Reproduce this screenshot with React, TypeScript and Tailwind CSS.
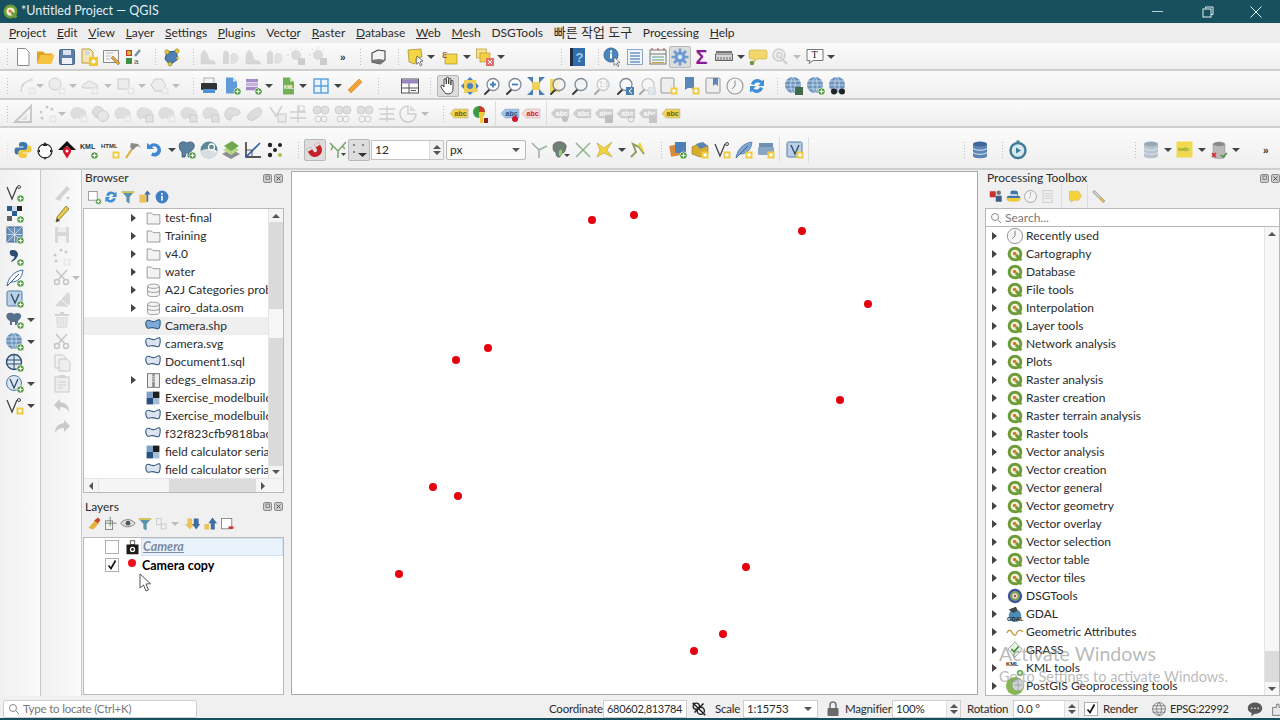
import React from "react";

const Svg = ({ children, s = 20, o = 1 }: { children?: React.ReactNode; s?: number; o?: number }) => (
  <svg viewBox="0 0 20 20" width={s} height={s} opacity={o} className="shrink-0">{children}</svg>
);

const P = () => (<g><circle cx="15.5" cy="15.5" r="3.6" fill="#4f9a3f" stroke="#fff" strokeWidth=".6" /><path d="M13.5 15.5h4M15.5 13.5v4" stroke="#fff" strokeWidth="1.2" /></g>);
const Y = ({ g }: { g?: boolean }) => (<g><rect x="11.5" y="11.5" width="7" height="7" fill={g ? "#cfcfcf" : "#f0cb42"} /><circle cx="15" cy="15" r="1.8" fill="#fff" /></g>);
const Handle = () => <path d="M3 18l4.5-4.5" stroke="#3c3c3c" strokeWidth="2" strokeLinecap="round" />;
const Mag = ({ c, f = "#ffffff", st = "#7f8c99" }: { c?: React.ReactNode; f?: string; st?: string }) => (<g><Handle /><circle cx="11" cy="8.5" r="6" fill={f} stroke={st} strokeWidth="1.3" />{c}</g>);
const Blob = ({ b = "#a9a9a9" }: { b?: string }) => <path d="M3 6c3-4 8-2 10-1s4 1 4 5-4 5-7 4-4 2-6 0-3-5-1-8z" fill={b} stroke="#8f8f8f" strokeWidth=".7" />;

const New = <Svg><path d="M4.5 1.5h8l3.5 3.5v13.5H4.5z" fill="#fff" stroke="#8b8b8b" /></Svg>;
const Open = <Svg><path d="M2 4.5h6l2 2h7.5v2H6L2 17z" fill="#e2a41f" /><path d="M5.5 8h14l-3 9H1.8z" fill="#f6c242" /></Svg>;
const Save = <Svg><rect x="2.5" y="2.5" width="15" height="15" rx="1" fill="#5a7fa8" stroke="#47688d" /><rect x="6" y="3" width="8" height="5" fill="#d9e3ee" /><rect x="5" y="11" width="10" height="6" fill="#eef2f6" /></Svg>;
const SaveAs = <Svg><path d="M3 2h8l3 3v11H3z" fill="#f4e6b0" stroke="#b89a3a" /><rect x="6" y="4" width="4" height="4" fill="#c9d6e4" /><rect x="10" y="10" width="9" height="9" fill="#f0c932" /><circle cx="14.5" cy="14.5" r="2" fill="#fff" /></Svg>;
const EditPage = <Svg><path d="M2.5 3.5h15v12h-15z" fill="#f7f7f7" stroke="#8a8a8a" /><path d="M5 6h7M5 9h5M5 12h4" stroke="#b8b8b8" /><path d="M17 18l-7-7 2-2 7 7z" fill="#d9a74a" stroke="#8f6a28" strokeWidth=".5" /></Svg>;
const Style = <Svg><rect x="3" y="3" width="6" height="6" fill="#c0392b" /><circle cx="6" cy="6" r="2.2" fill="#d6b43c" /><rect x="3" y="11" width="6" height="6" fill="#3f8f4b" /><path d="M12 9l5-6" stroke="#7b8ba0" strokeWidth="2.4" /><text x="11" y="17" fontSize="8" fill="#555" fontFamily="Liberation Sans">a</text></Svg>;
const Plug = <Svg><path d="M6 5l9-1 2 8-8 6-5-6z" fill="#4d7fb3" stroke="#2b5a8c" /><circle cx="6" cy="5" r="2.2" fill="#e7c93d" stroke="#7a6a20" strokeWidth=".5" /><circle cx="16" cy="4" r="2.2" fill="#e7c93d" stroke="#7a6a20" strokeWidth=".5" /><circle cx="9" cy="17" r="2" fill="#e7c93d" stroke="#7a6a20" strokeWidth=".5" /><circle cx="17" cy="11" r="1.5" fill="#e7c93d" /></Svg>;
const Hist = <Svg o={0.3}><path d="M3 17V7l3-4 3 3 2 7 5 1 2 3z" fill="#999" stroke="#888" strokeWidth=".5" /></Svg>;
const Hist2 = <Svg o={0.3}><path d="M2 17V6l3-3 3 3v11z" fill="#999" /><path d="M10 8c3-3 7-1 7 3s-4 6-7 5z" fill="#bbb" stroke="#888" strokeWidth=".6" /></Svg>;
const Bulb = <Svg o={0.35}><circle cx="9" cy="8" r="5" fill="#aaa" /><path d="M9 0v2M2 8H0M4 3L3 2M14 3l1-1" stroke="#999" /><rect x="11" y="11" width="7" height="7" fill="#888" /></Svg>;
const More = <Svg><text x="5" y="14" fontSize="10" fontWeight="700" fill="#333" fontFamily="Liberation Sans">»</text></Svg>;
const Cube = <Svg><path d="M4 6l6-3 7 1v9l-5 4-8-2z" fill="#f2f2f2" stroke="#444" strokeWidth="1.1" /><path d="M4 13l7-1 6 1-5 4-8-2z" fill="#777" /></Svg>;
const SelYellow = <Svg><path d="M2 3l13-1 1 8-6 1-1 6-6-2z" fill="#f3d545" stroke="#8f7a1d" strokeWidth=".6" /><path d="M11 9l6 5-3 .5 2 3.500-1.500 .8-2-3.500-2 2z" fill="#fff" stroke="#444" strokeWidth=".7" /></Svg>;
const SelExpr = <Svg><rect x="5" y="7" width="12" height="10" fill="#f3d545" stroke="#9a852b" strokeWidth=".6" /><text x="2" y="11" fontSize="13" fill="#8a4a14" fontFamily="Liberation Serif">ε</text></Svg>;
const SelDesel = <Svg><rect x="1.500" y="2" width="10" height="9" fill="#f6e18a" stroke="#b89a3a" strokeWidth=".7" /><rect x="5" y="6" width="10" height="9" fill="#f3cf45" stroke="#b89a3a" strokeWidth=".7" /><rect x="11" y="11" width="8" height="8" fill="#e46b6b" /><path d="M13 13l4 4M17 13l-4 4" stroke="#fff" /></Svg>;
const HelpBook = <Svg><rect x="3" y="1" width="15" height="18" fill="#2f6ea8" /><rect x="3" y="1" width="3" height="18" fill="#1e2f44" /><text x="8.500" y="15" fontSize="13" fontWeight="700" fill="#a9cbe8" fontFamily="Liberation Sans">?</text></Svg>;
const Identify = <Svg><circle cx="8" cy="8" r="7" fill="#4a85bd" stroke="#38699a" /><rect x="7" y="6.500" width="2" height="5" fill="#fff" /><rect x="7" y="3.500" width="2" height="2" fill="#fff" /><path d="M11 10l6 5.500-2.800 .3 1.800 3-1.200 .7-1.800-3-2 2z" fill="#fff" stroke="#555" strokeWidth=".7" /></Svg>;
const Attr = <Svg><rect x="2.500" y="2.500" width="15" height="15" fill="#f1f5f9" stroke="#8ca6c2" /><path d="M5 6h10M5 9h10M5 12h10M5 15h10" stroke="#6d94be" strokeWidth="1.300" /></Svg>;
const Stats = <Svg><rect x="2" y="3" width="16" height="14" fill="#f4f4f4" stroke="#777" /><path d="M2 7h16" stroke="#777" /><path d="M4 3V1M10 3V1M16 3V1" stroke="#c0392b" /><path d="M4 10h12M4 13h12" stroke="#50a090" strokeWidth="1.200" /><path d="M4 15.500h12" stroke="#d0a030" /></Svg>;
const Gear = <Svg><g stroke="#6e9bd1" strokeWidth="2.600"><path d="M10 1.500v17M1.500 10h17M4 4l12 12M16 4L4 16" /></g><circle cx="10" cy="10" r="5.500" fill="#6e9bd1" /><circle cx="10" cy="10" r="2.200" fill="#dce7f4" /></Svg>;
const Sigma = <Svg><text x="3.500" y="17" fontSize="20" fontWeight="700" fill="#8a1a96" fontFamily="Liberation Sans">Σ</text></Svg>;
const Ruler = <Svg><rect x="1.500" y="7" width="17" height="6.500" fill="#d8d8d8" stroke="#666" /><path d="M4 10v3.500M7 10v3.500M10 10v3.500M13 10v3.500M16 10v3.500" stroke="#666" /><rect x="2" y="4" width="16" height="2" fill="#777" /></Svg>;
const Tip = <Svg><path d="M3 3h14q2 0 2 2v5q0 2-2 2H9l-3 3 .5-3H3q-2 0-2-2V5q0-2 2-2z" fill="#f3d76a" stroke="#c9ab3b" strokeWidth=".6" /><circle cx="4" cy="16" r="2.300" fill="#6f9a45" /></Svg>;
const DisSearch = <Svg o={0.35}><circle cx="9" cy="8" r="6" fill="#ddd" stroke="#888" strokeWidth="1.500" /><text x="6" y="11" fontSize="8" fill="#777" fontWeight="700">Q</text><path d="M13 13l4 4" stroke="#888" strokeWidth="2" /></Svg>;
const TextT = <Svg><path d="M2 2.500h16v11H8l-4 3 1-3H2z" fill="#fdfdfd" stroke="#777" /><text x="6.500" y="11" fontSize="10" fill="#222" fontFamily="Liberation Serif">T</text></Svg>;

const dis = (c: React.ReactNode) => <Svg o={0.33}>{c}</Svg>;
const D1 = dis(<><path d="M4 16C4 9 8 5 14 4" fill="none" stroke="#777" strokeWidth="1.200" /><circle cx="14" cy="4" r="2" fill="#bbb" /><Y g /></>);
const D2 = dis(<><circle cx="8" cy="8" r="6" fill="#ddd" stroke="#777" /><Y g /></>);
const D3 = dis(<><path d="M2 11c0-3 3-3 4-4 2-3 7-2 8 1 3 0 4 2 3 4H3z" fill="#ddd" stroke="#777" /><Y g /></>);
const D4 = dis(<><rect x="2" y="3" width="11" height="10" fill="#ddd" stroke="#777" /><Y g /></>);
const D5 = dis(<><path d="M5 3h7l4 6-4 6H5L1 9z" fill="#ddd" stroke="#777" /><Y g /></>);
const Printer = <Svg><rect x="5" y="2" width="10" height="6" fill="#f2f2f2" stroke="#888" strokeWidth=".6" /><rect x="2" y="7" width="16" height="7" rx="1" fill="#2e3338" /><rect x="4" y="13" width="12" height="4" fill="#4e90d2" /></Svg>;
const BlueDoc = <Svg><path d="M4 1.500h7l4 4v12H4z" fill="#5f9bd8" /><path d="M11 1.500v4h4z" fill="#cfe2f5" /><P /></Svg>;
const Purple = <Svg><rect x="3" y="3" width="12" height="3.300" fill="#a78cc9" /><rect x="3" y="7" width="12" height="3.300" fill="#c6b3dd" /><rect x="3" y="11" width="12" height="3.300" fill="#a78cc9" /><P /></Svg>;
const Kml = <Svg><path d="M4 1.500h7l4 4v13H4z" fill="#74b057" /><path d="M11 1.500v4h4z" fill="#d8ecc8" /><text x="5" y="13" fontSize="4.500" fontWeight="700" fill="#fff" fontFamily="Liberation Sans">KML</text></Svg>;
const Grid = <Svg><rect x="3" y="3" width="14" height="14" fill="#e9f3fb" stroke="#57a0de" strokeWidth="1.400" /><path d="M10 3v14M3 10h14" stroke="#57a0de" strokeWidth="1.400" /></Svg>;
const Ruler2 = <Svg><path d="M3 14L14 3l3 3L6 17z" fill="#f2a23a" stroke="#cf7f18" strokeWidth=".6" /></Svg>;
const Tbl = <Svg><rect x="1.500" y="3" width="17" height="14" fill="#fafafa" stroke="#555" /><rect x="2" y="3.500" width="16" height="4" fill="#9a87c0" /><path d="M1.500 12h17M9 7.500V17" stroke="#555" /><path d="M11 14.500h5" stroke="#555" /></Svg>;
const Hand = <Svg><path d="M6 10V4q0-1.300 1.100-1.300T8.300 4v4-5.500q0-1.300 1.200-1.300t1.200 1.300V8 3.500q0-1.200 1.100-1.200t1.100 1.200V9 5.500q0-1.200 1.100-1.200t1 1.200V12q0 6-5 6-3 0-4.500-3L3 11q-.5-1.500.7-1.700T6 11z" fill="#fff" stroke="#333" strokeWidth=".9" /></Svg>;
const Pan = <Svg><path d="M4 4l12 0 2 12-14 1z" fill="#efd15a" /><path d="M10 1l3 3H7zM10 19l3-3H7zM1 10l3-3v6zM19 10l-3-3v6z" fill="#4a83c4" /><circle cx="10" cy="10" r="3" fill="#4a83c4" /></Svg>;
const ZoomIn = <Svg><Mag c={<path d="M8 8.500h6M11 5.500v6" stroke="#3f7dbf" strokeWidth="1.800" />} /></Svg>;
const ZoomOut = <Svg><Mag c={<path d="M8 8.500h6" stroke="#3f7dbf" strokeWidth="1.800" />} /></Svg>;
const ZoomFull = <Svg><rect x="6" y="6" width="8" height="8" fill="#efd15a" /><path d="M1 1h6v6zM19 1h-6v6zM1 19h6v-6zM19 19h-6v-6z" fill="#4a7fb0" /></Svg>;
const ZoomLayer = <Svg><rect x="2" y="3" width="10" height="13" fill="#f1d558" /><Mag f="#f6f6f6cc" /></Svg>;
const ZoomSel = <Svg><Mag f="#f3f3f3" /></Svg>;
const Zoom11 = <Svg o={0.4}><Mag f="#fafafa" c={<text x="7" y="11" fontSize="7" fill="#888">1:1</text>} /></Svg>;
const ZoomLast = <Svg><Mag f="#fafafa" /><rect x="11" y="11" width="8" height="8" fill="#4a7fb0" /><path d="M17 12.500l-3 2.500 3 2.500" stroke="#fff" fill="none" /></Svg>;
const ZoomNext = <Svg o={0.4}><Mag f="#fafafa" /><rect x="11" y="11" width="8" height="8" fill="#b8c6d4" /><path d="M13 12.500l3 2.500-3 2.500" stroke="#fff" fill="none" /></Svg>;
const Bm1 = <Svg><rect x="2" y="2" width="13" height="15" rx="1" fill="#eee" stroke="#999" /><Y /></Svg>;
const Bm2 = <Svg><path d="M4 1h9v13l-4.500-3L4 14z" fill="#5b87b8" /><path d="M4 1h9v11H4z" fill="#5b87b8" /><Y /></Svg>;
const Bm3 = <Svg><rect x="3" y="2" width="14" height="15" rx="1" fill="#eee" stroke="#999" /><path d="M10 2h5v8l-2.500-2L10 10z" fill="#5b87b8" /></Svg>;
const Clock = <Svg><circle cx="10" cy="10" r="8" fill="#f5f5f5" stroke="#9a9a9a" strokeWidth="1.200" /><path d="M10 4.500V10l-3 3" stroke="#888" fill="none" /></Svg>;
const Refresh = <Svg><path d="M4 8a6.500 6.500 0 0 1 11-3l2-1.500V10h-6l2.500-2.500A4 4 0 0 0 7 9z" fill="#3f8fd6" /><path d="M16 12a6.500 6.500 0 0 1-11 3l-2 1.500V10h6l-2.500 2.500A4 4 0 0 0 13 11z" fill="#3f8fd6" /></Svg>;
const Globe = ({ b }: { b?: React.ReactNode }) => <Svg><circle cx="9" cy="9" r="8" fill="#6d94bd" /><path d="M9 1c-3 3-3 13 0 16M9 1c3 3 3 13 0 16M1 9h16M2 5h14M2 13h14" stroke="#dfe9f3" strokeWidth=".7" fill="none" />{b}</Svg>;
const G1 = <Globe b={<rect x="11" y="11" width="8" height="8" fill="#41694a" />} />;
const G2 = <Globe b={<P />} />;
const G3 = <Globe b={<g fill="#222"><circle cx="6" cy="15.500" r="3" /><circle cx="14" cy="15.500" r="3" /></g>} />;
const dd = (c: React.ReactNode) => <Svg o={0.3}>{c}</Svg>;
const R1 = dd(<><path d="M2 18L18 2v16z" fill="none" stroke="#666" strokeWidth="2" /><path d="M8 16l6-6v6z" fill="#bbb" /></>);
const R2 = dd(<><circle cx="3" cy="8" r="1.500" fill="#666" /><circle cx="9" cy="3" r="1.500" fill="#666" /><circle cx="14" cy="5" r="1.500" fill="#666" /><circle cx="4" cy="14" r="1.500" fill="#666" /><Y g /></>);
const R3 = dd(<><Blob /><Y g /></>);
const R4 = dd(<><circle cx="7" cy="8" r="5.500" fill="#aaa" stroke="#777" /><circle cx="12" cy="12" r="5.500" fill="#ccc" stroke="#777" /></>);
const R5 = dd(<><Blob /><rect x="11" y="11" width="7" height="7" fill="#bbb" stroke="#777" /></>);
const R6 = dd(<><path d="M2 10c0-6 6-7 9-6s7 2 6 5-5 2-7 3-1 5-4 4-4-3-4-6z" fill="#aaa" stroke="#777" /></>);
const R7 = dd(<><path d="M3 15c-2-3 1-6 4-8s7-5 9-2 0 6-4 9-7 3-9 1z" fill="#aaa" stroke="#777" /></>);
const R8 = dd(<><path d="M2 3l6 9 6-10" fill="none" stroke="#777" strokeWidth="1.500" /><rect x="10" y="10" width="8" height="8" fill="#ddd" stroke="#666" /></>);
const R9 = dd(<><path d="M10 1v18M2 8h16M2 14h16" stroke="#777" strokeWidth="1.300" /><rect x="11" y="2" width="5" height="5" fill="none" stroke="#777" /></>);
const R10 = dd(<><circle cx="6" cy="6" r="4" fill="#aaa" stroke="#777" /><circle cx="14" cy="6" r="4" fill="#aaa" stroke="#777" /><circle cx="7" cy="15" r="3" fill="none" stroke="#777" /><circle cx="13" cy="15" r="3" fill="none" stroke="#777" /></>);
const R11 = dd(<><path d="M2 5h16M3 10h14M2 15h16M10 2v16" stroke="#777" strokeWidth="1.300" /></>);
const R12 = dd(<><path d="M10 2a8 8 0 1 0 8 8h-8z" fill="none" stroke="#777" strokeWidth="1.500" /><path d="M12 1l6 6h-6z" fill="#999" /></>);
const Abc = ({ f = "#f2d254", t = "#6f5f10", o = 1, b }: { f?: string; t?: string; o?: number; b?: React.ReactNode }) => (<Svg o={o}><path d="M1 9.500L5 5h14v9H5z" fill={f} stroke="#9a9a9a" strokeWidth=".4" /><text x="5.500" y="12" fontSize="7" fontWeight="700" fill={t} fontFamily="Liberation Sans">abc</text>{b}</Svg>);
const PieL = <Svg><circle cx="8" cy="8" r="6" fill="#3d9a45" /><path d="M8 8V2a6 6 0 0 1 6 6z" fill="#d73527" /><path d="M8 8h6a6 6 0 0 1-6 6z" fill="#f0c93a" /><rect x="9" y="12" width="3" height="7" fill="#f0c93a" /><rect x="13" y="14" width="4" height="5" fill="#8f1e1e" /></Svg>;
const PyL = <Svg><path d="M10 2c-4 0-4 1.500-4 3v1.500h4.500V7.500H4C2 7.500 1.500 9 1.500 11s1 3.500 2.500 3.500h1.500v-2c0-1.500 1-2.500 2.500-2.500h4c1.500 0 2.500-1 2.500-2.500V5c0-2-2-3-4.500-3z" fill="#3d78ad" /><path d="M10 18c4 0 4-1.500 4-3v-1.500H9.500v-1H16c2 0 2.500-1.500 2.500-3.500s-1-3.500-2.500-3.500h-1.500v2c0 1.500-1 2.500-2.500 2.500H8c-1.500 0-2.500 1-2.500 2.500V15c0 2 2 3 4.500 3z" fill="#f0c93d" /></Svg>;
const Compass = <Svg><circle cx="10" cy="11" r="7" fill="#fff" stroke="#222" strokeWidth="1.100" /><path d="M10 2l2.500 4h-5zM10 20l-1.500-3h3zM2 11l3-1.500v3zM18 11l-3-1.500v3z" fill="#222" /></Svg>;
const RedArrow = <Svg><path d="M10 1l9 9h-5L10 6l-4 4H1z" fill="#111" /><path d="M10 7c3 0 4.500 2 4 5l-4 6.500L6 12c-.5-3 1-5 4-5z" fill="#d8152a" /><circle cx="10" cy="11" r="1.500" fill="#fff" /></Svg>;
const KmlT = <Svg><text x="1" y="9" fontSize="7" fontWeight="700" fill="#333" fontFamily="Liberation Sans">KML</text><P /></Svg>;
const HtmlT = <Svg><text x="0" y="8" fontSize="6" fontWeight="700" fill="#333" fontFamily="Liberation Sans">HTML</text><Y /></Svg>;
const Hammer = <Svg><path d="M3 18L11 6" stroke="#e0a93a" strokeWidth="2" /><path d="M8 3l7 1 3 4-3-2-2 1-3 3-3-3z" fill="#8a8a8a" /></Svg>;
const Undo = <Svg><path d="M16 10a6.500 6.500 0 0 1-10 5.500l1.500-3A3.500 3.500 0 0 0 12.500 10 3.500 3.500 0 0 0 7 7l2 2H2V3l2.500 2A7 7 0 0 1 16 10z" fill="#3f87d1" /></Svg>;
const Pg = <Svg><path d="M3 3c3-2 5-1 7 0 3-2 6-1 7 1 1 3-1 6-3 7v6h-3v-5l-2 1-1 4H5v-5C3 11 1 6 3 3z" fill="#5b7f9f" stroke="#2f4f6a" strokeWidth=".7" /><P /></Svg>;
const TealG = <Svg><circle cx="10" cy="10" r="8.500" fill="#5c8a98" /><path d="M1.500 11c5-3 12-2 17 0-1 5-5 7.500-8.500 7.500S2.500 16 1.500 11z" fill="#d8dfe3" /><circle cx="12.500" cy="7" r="3" fill="none" stroke="#fff" strokeWidth="1.300" /><path d="M14.500 9.500l2.500 2.500" stroke="#fff" strokeWidth="1.300" /></Svg>;
const Lay = <Svg><path d="M10 9l9 5-9 5-9-5z" fill="#8a8f94" /><path d="M10 5l8 5-8 5-8-5z" fill="#b7d686" /><path d="M11 1l7 5-8 5-7-5z" fill="#6fa84d" /></Svg>;
const Graph = <Svg><path d="M3 2v15h15" fill="none" stroke="#222" strokeWidth="1.400" /><path d="M3 17L17 3" stroke="#2a5fb0" strokeWidth="1.600" /><path d="M4 10h5v7" fill="none" stroke="#555" /></Svg>;
const Dots = <Svg><circle cx="5" cy="5" r="2.200" fill="#222" /><circle cx="15" cy="5" r="2" fill="#222" /><circle cx="10" cy="10" r="2" fill="#222" /><circle cx="5" cy="15" r="2.200" fill="#222" /><circle cx="15" cy="15" r="2" fill="#a5c24a" /></Svg>;
const Magnet = <Svg><path d="M3 5l5 0 0 5c0 3 4 3 4 0l0-5 5 0 0 5c0 9-14 9-14 0z" transform="rotate(-30 10 10)" fill="#c82027" /><path d="M3 5h5v3H3zM12 5h5v3h-5z" transform="rotate(-30 10 10)" fill="#ddd" /></Svg>;
const Tree1 = <Svg><path d="M2 3l8 8 8-9M10 11v7M5 6l-2 4M14 6l3 3" stroke="#7da06b" strokeWidth="1.500" fill="none" /><path d="M13 13l5 0-2.500 3z" fill="#444" /></Svg>;
const Spacing = <Svg><rect x="4" y="4" width="2" height="2" fill="#888" /><rect x="13" y="4" width="2" height="2" fill="#888" /><rect x="4" y="11" width="2" height="2" fill="#888" /><path d="M9 13l9 0-4.500 4z" fill="#333" /></Svg>;
const TreeGray = <Svg><path d="M3 3l7 7 8-4M10 10v8" stroke="#9db3a3" strokeWidth="1.600" fill="none" /></Svg>;
const BlobG = <Svg><path d="M2 6c0-4 6-5 9-4s5 3 4 6-1 4-3 5-2 5-5 4-1-4-3-5-2-3-2-6z" fill="#6f7f76" stroke="#3f4f46" strokeWidth=".5" /><path d="M8 12c0-3 3-3 3-1s0 5-2 5-1-2-1-4z" fill="#9ccc70" /><path d="M13 14l6 0-3 3z" fill="#444" /></Svg>;
const XG = <Svg><path d="M3 3l14 14M17 3L3 17" stroke="#8fb58f" strokeWidth="1.500" /></Svg>;
const XY = <Svg><path d="M2 3l7 5 8-6-5 8 5 7-8-4-7 4 3-7z" fill="#f2d33b" stroke="#a8911e" strokeWidth=".5" /></Svg>;
const Fork = <Svg><path d="M3 17l5-5-3-8 6 3 5 7" stroke="#8ba05f" strokeWidth="2" fill="none" /><path d="M12 2l4 9-1 1-5-7z" fill="#f0d23d" /></Svg>;
const Stack = <Svg><rect x="2" y="5" width="10" height="11" fill="#d98b3a" transform="rotate(-10 7 10)" /><rect x="7" y="2" width="11" height="11" fill="#4f80b8" /><P /></Svg>;
const Box3 = <Svg><path d="M2 7l8-4 8 3v8l-8 3-8-3z" fill="#d7ad2e" stroke="#7c6314" strokeWidth=".5" /><path d="M6 4l7-2 5 4-8 3z" fill="#5a85b3" /><Y /></Svg>;
const VStar = <Svg><path d="M3 4l5 12 5-12" fill="none" stroke="#444" strokeWidth="1.300" /><circle cx="15" cy="4" r="1.500" fill="none" stroke="#444" /><Y /></Svg>;
const Feather = <Svg><path d="M2 18C3 10 9 3 18 2c-1 8-5 12-12 12" fill="#7fa5d2" stroke="#3f6ea5" strokeWidth=".7" /><path d="M2 18L14 6" stroke="#2d5586" strokeWidth=".8" /><Y /></Svg>;
const Frame = <Svg><rect x="3" y="3" width="14" height="4" fill="#6b8fb5" /><rect x="2" y="7" width="16" height="8" rx="1" fill="#8aa6c4" /><Y /></Svg>;
const VBox = <Svg><rect x="2" y="2" width="15" height="15" rx="1.500" fill="#bcd0e5" stroke="#527ba3" /><path d="M6 5l4 9 4-9" fill="none" stroke="#2d4f70" strokeWidth="1.400" /><Y /></Svg>;
const Db = ({ a = "#5e86b5", b = "#3f6799", o = 1, c }: { a?: string; b?: string; o?: number; c?: React.ReactNode }) => (<Svg o={o}><path d="M3 4v12c0 3 14 3 14 0V4z" fill={a} /><ellipse cx="10" cy="4" rx="7" ry="2.500" fill={b} /><path d="M3 8c0 3 14 3 14 0M3 12c0 3 14 3 14 0" stroke="#dfe8f2" fill="none" />{c}</Svg>);
const Timer = <Svg><circle cx="10" cy="10.500" r="7.500" fill="#d9e7ee" stroke="#3f7d97" strokeWidth="2.400" /><rect x="8.500" y="0.500" width="3" height="2" fill="#3f7d97" /><path d="M8 7.500l5 3-5 3z" fill="#3f7d97" /></Svg>;
const TodoY = <Svg><rect x="1.500" y="1.500" width="16" height="16" fill="#f2d84f" /><text x="3" y="11" fontSize="5" fontWeight="700" fill="#6aa52d" fontFamily="Liberation Sans">todo</text></Svg>;
const DbX = <Svg><path d="M4 4v13c0 2 12 2 12 0V4z" fill="#b9b9b9" stroke="#888" strokeWidth=".5" /><ellipse cx="10" cy="4" rx="6" ry="2.200" fill="#8a8a8a" /><path d="M3 13l4 4M7 13l-4 4" stroke="#d52a2a" strokeWidth="1.600" /><path d="M12 15l2 2 4-4" stroke="#4f9a3f" strokeWidth="1.600" fill="none" /></Svg>;

const Vadd = <Svg><path d="M2 4l5 12 5-12" fill="none" stroke="#444" strokeWidth="1.300" /><circle cx="14" cy="4" r="1.500" fill="none" stroke="#444" /><P /></Svg>;
const Check = <Svg><rect x="2" y="2" width="5" height="5" fill="#2b5c8f" /><rect x="7" y="7" width="5" height="5" fill="#2b5c8f" /><rect x="2" y="12" width="5" height="5" fill="#222" opacity=".7" /><rect x="12" y="2" width="5" height="5" fill="#222" /><rect x="7" y="2" width="5" height="5" fill="#cfdce9" /><P /></Svg>;
const Check0 = <Svg s={16}><rect x="10" y="2" width="8" height="8" fill="#1d1d1d" /><rect x="2" y="10" width="8" height="8" fill="#27527d" /><rect x="2" y="2" width="8" height="8" fill="#7da1c5" /><rect x="10" y="10" width="8" height="8" fill="#a6bdd4" /></Svg>;
const MeshA = <Svg><rect x="2" y="2" width="15" height="15" fill="#6d92bb" stroke="#3f6690" /><path d="M2 2l15 15M17 2L2 17M9.500 2v15M2 9.500h15" stroke="#e7eef5" strokeWidth=".7" /><P /></Svg>;
const Comma = <Svg><path d="M5 4a5 5 0 0 1 8 3c0 4-4 7-7 8l1-2c2-1 3-3 2-4-3 1-5-2-4-5z" fill="#2c4d70" /><P /></Svg>;
const Feat2 = <Svg><path d="M2 18C3 10 9 3 18 2c-1 8-5 12-12 12" fill="#fff" stroke="#3f6ea5" /><path d="M2 18L14 6" stroke="#2d5586" /><P /></Svg>;
const VBoxP = <Svg><rect x="2" y="2" width="15" height="15" rx="1.500" fill="#bcd0e5" stroke="#527ba3" /><path d="M6 5l4 9 4-9" fill="none" stroke="#2d4f70" strokeWidth="1.400" /><P /></Svg>;
const PgP = <Svg><path d="M2 4c3-2 5-1 7 0 3-2 6-1 7 1s-2 5-3 6v4h-3v-3H7v3H5v-4C3 10 0 7 2 4z" fill="#55718c" /><P /></Svg>;
const Wms = <Globe b={<P />} />;
const Wfs = <Svg><circle cx="9" cy="9" r="7.500" fill="#dbe6f1" stroke="#2c4d70" strokeWidth="1.400" /><path d="M1.500 7h15M1.500 11h15M9 1.500v15" stroke="#2c4d70" /><P /></Svg>;
const VGlobe = <Svg><circle cx="9" cy="9" r="7.500" fill="#dbe6f1" stroke="#4f79a4" /><path d="M5 5l4 9 4-9" fill="none" stroke="#2d4f70" strokeWidth="1.300" /><P /></Svg>;
const VY = <Svg><path d="M2 4l5 12 5-12" fill="none" stroke="#444" strokeWidth="1.300" /><circle cx="14" cy="4" r="1.500" fill="none" stroke="#444" /><Y /></Svg>;

const E1 = dd(<><path d="M3 16L15 3l3 3-8 8-2 4z" fill="#888" /><path d="M14 14l4 0-2 3z" fill="#555" /></>);
const Pencil = <Svg><path d="M4 18l1-5L14 2l3 3L7 16z" fill="#e7c84a" stroke="#6c6c2c" strokeWidth=".7" /><path d="M4 18l1-4 3 3z" fill="#444" /></Svg>;
const E3 = dd(<><rect x="3" y="2" width="14" height="16" rx="1" fill="#999" /><rect x="6" y="2" width="8" height="5" fill="#ddd" /><rect x="6" y="11" width="8" height="7" fill="#eee" /></>);
const E4 = dd(<><path d="M3 17L16 3l2 3v9l-3 3z" fill="#999" /><path d="M5 6l11 11" stroke="#fff" /></>);
const Trash = dd(<><rect x="3" y="4" width="14" height="2" fill="#888" /><rect x="8" y="2" width="4" height="2" fill="#888" /><path d="M4 7h12l-1 11H5z" fill="#aaa" /><path d="M7 8v9M10 8v9M13 8v9" stroke="#eee" /></>);
const Scissors = dd(<><circle cx="5" cy="14" r="2.500" fill="none" stroke="#555" strokeWidth="1.400" /><circle cx="14" cy="14" r="2.500" fill="none" stroke="#555" strokeWidth="1.400" /><path d="M6 12l9-10M13 12L4 2" stroke="#555" strokeWidth="1.400" /></>);
const CopyD = dd(<><path d="M3 2h8l3 3v10H3z" fill="#eee" stroke="#666" /><path d="M7 6h8l3 3v9H7z" fill="#ddd" stroke="#666" /></>);
const PasteD = dd(<><rect x="3" y="3" width="14" height="15" fill="#ddd" stroke="#666" /><rect x="7" y="1" width="6" height="3" fill="#888" /><path d="M6 8h8M6 11h8M6 14h5" stroke="#777" /></>);
const UndoD = dd(<path d="M8 3L2 9l6 6v-4c4 0 7 1 9 5 0-6-3-9-9-10z" fill="#666" />);
const RedoD = dd(<path d="M12 3l6 6-6 6v-4c-4 0-7 1-9 5 0-6 3-9 9-10z" fill="#666" />);

const Qlogo = ({ s = 18 }: { s?: number }) => (<Svg s={s}><circle cx="10" cy="10" r="6.500" fill="#f6f2dd" stroke="#6f9c3a" strokeWidth="3.300" /><path d="M11 11l6 6" stroke="#6f9c3a" strokeWidth="3.300" /><circle cx="9.500" cy="9.500" r="2" fill="#d9742f" /></Svg>);

const G = ({ c }: { c: string }) => <div className={`h-[18px] w-[3px] shrink-0 bg-[radial-gradient(#bdbdbd_40%,transparent_45%)] bg-[length:3px_3px] ${c}`} />;
const B = ({ i, c = "", on }: { i: React.ReactNode; c?: string; on?: boolean }) => (
  <div className={`flex h-[22px] w-[22px] shrink-0 items-center justify-center ${on ? "rounded-[2px] border border-[#b8b8b8] bg-[#dddddd]" : ""} ${c}`}>{i}</div>
);
const Dr = ({ c = "", o }: { c?: string; o?: boolean }) => (
  <div className={`flex h-[22px] w-[8px] shrink-0 items-center justify-center ${c}`}>
    <div className={`h-0 w-0 border-x-[4px] border-t-[4px] border-x-transparent ${o ? "border-t-[#bdbdbd]" : "border-t-[#444444]"}`} />
  </div>
);
const Sep = ({ c }: { c: string }) => <div className={`h-[26px] w-px shrink-0 bg-[#dddddd] ${c}`} />;
const Bar = ({ c, children }: { c: string; children: React.ReactNode }) => (
  <div className={`flex shrink-0 items-center overflow-hidden border-b-2 border-[#cfcfcf] bg-linear-to-b from-[#fbfbfb] to-[#efefef] ${c}`}>{children}</div>
);

const Tri = ({ c = "" }: { c?: string }) => <div className={`h-0 w-0 shrink-0 border-y-[4px] border-l-[5px] border-y-transparent border-l-[#444444] ${c}`} />;
const Folder = <Svg s={17}><path d="M2.500 3.500h5l2 2h8v11h-15z" fill="#f3f3f3" stroke="#8e8e8e" /></Svg>;
const DbT = <Svg s={17}><path d="M3 5v10c0 3 14 3 14 0V5" fill="#f4f4f4" stroke="#8e8e8e" /><ellipse cx="10" cy="5" rx="7" ry="2.500" fill="#f4f4f4" stroke="#8e8e8e" /><path d="M3 10c0 3 14 3 14 0" fill="none" stroke="#8e8e8e" /></Svg>;
const Shp = ({ f = "#dbe4f0" }: { f?: string }) => <Svg s={18}><path d="M2 7c0-3 2-4 4-3s5 2 8 0 4-1 4 2-1 7-3 7-4-2-7-1-6 1-6-5z" fill={f} stroke="#33597f" strokeWidth="1.200" /></Svg>;
const Zip = <Svg s={17}><rect x="3" y="2" width="14" height="16" fill="#eee" stroke="#666" /><rect x="8.500" y="2" width="3" height="16" fill="#888" /><path d="M8.500 5h3M8.500 8h3M8.500 11h3" stroke="#eee" /></Svg>;

const browser: [string, React.ReactNode, boolean, boolean?][] = [
  ["test-final", Folder, true],
  ["Training", Folder, true],
  ["v4.0", Folder, true],
  ["water", Folder, true],
  ["A2J Categories problem", DbT, true],
  ["cairo_data.osm", DbT, true],
  ["Camera.shp", <Shp f="#7eaadb" />, false, true],
  ["camera.svg", <Shp />, false],
  ["Document1.sql", <Shp />, false],
  ["edegs_elmasa.zip", Zip, true],
  ["Exercise_modelbuilder", Check0, false],
  ["Exercise_modelbuilder", <Shp />, false],
  ["f32f823cfb9818bac0b2", <Shp />, false],
  ["field calculator serial", Check0, false],
  ["field calculator serial", <Shp />, false],
];

const Q = <Qlogo />;
const Gd = <Svg s={18}><circle cx="10" cy="12" r="7" fill="#4c8db5" /><path d="M3 5l8-3 2 4-5 3z" fill="#444" /><text x="1" y="18" fontSize="6.500" fontWeight="700" fill="#222" fontFamily="Liberation Sans">GDAL</text></Svg>;
const Ds = <Svg s={18}><circle cx="10" cy="10" r="8" fill="#3f4fa0" /><circle cx="10" cy="10" r="5.500" fill="#7aa35a" /><circle cx="10" cy="10" r="3" fill="#e8e4c8" /><circle cx="10" cy="10" r="1.300" fill="#c04050" /></Svg>;
const Wave = <Svg s={18}><path d="M1 11c2-4 4-4 6 0s4 3 5 0 4-4 7-1" fill="none" stroke="#c79a3c" strokeWidth="1.500" /></Svg>;
const Grass = <Svg s={18}><path d="M10 1l8 8-8 9-8-9z" fill="#e8f0e0" stroke="#777" strokeWidth=".7" /><path d="M6 9l3 3 5-6" stroke="#3f8f3f" strokeWidth="1.800" fill="none" /></Svg>;
const KmlS = <Svg s={18}><text x="0" y="8" fontSize="6.500" fontWeight="700" fill="#333" fontFamily="Liberation Sans">KML</text><P /></Svg>;
const Pgeo = <Svg s={20}><circle cx="10" cy="10" r="9" fill="#86b84f" /><circle cx="13" cy="9" r="6" fill="#cfd4d4" stroke="#888" strokeWidth=".5" /><path d="M9 9h8M13 4v11" stroke="#888" strokeWidth=".6" /></Svg>;
const ClockS = <Svg s={18}><circle cx="10" cy="10" r="8.500" fill="#f7f7f7" stroke="#8a8a8a" /><path d="M10 4v6l-3 3" stroke="#777" fill="none" /></Svg>;

const proc: [string, React.ReactNode][] = [
  ["Recently used", ClockS], ["Cartography", Q], ["Database", Q], ["File tools", Q], ["Interpolation", Q], ["Layer tools", Q], ["Network analysis", Q], ["Plots", Q],
  ["Raster analysis", Q], ["Raster creation", Q], ["Raster terrain analysis", Q], ["Raster tools", Q], ["Vector analysis", Q], ["Vector creation", Q], ["Vector general", Q],
  ["Vector geometry", Q], ["Vector overlay", Q], ["Vector selection", Q], ["Vector table", Q], ["Vector tiles", Q], ["DSGTools", Ds], ["GDAL", Gd], ["Geometric Attributes", Wave],
  ["GRASS", Grass], ["KML tools", KmlS], ["PostGIS Geoprocessing tools", Pgeo],
];

const points = [
  "left-[296px] top-[44px]", "left-[338px] top-[39px]", "left-[506px] top-[55px]", "left-[572px] top-[128px]", "left-[192px] top-[172px]", "left-[160px] top-[184px]",
  "left-[544px] top-[224px]", "left-[137px] top-[311px]", "left-[162px] top-[320px]", "left-[450px] top-[391px]", "left-[103px] top-[398px]", "left-[427px] top-[458px]", "left-[398px] top-[475px]",
];

const Dock = () => (
  <div className="flex shrink-0 gap-[2px]">
    <svg width="9" height="9" viewBox="0 0 9 9"><rect x=".5" y=".5" width="8" height="8" rx="1.500" fill="#cfcfcf" stroke="#666" strokeWidth=".7" /><rect x="3" y="2" width="3.500" height="3.500" fill="none" stroke="#666" strokeWidth=".7" /></svg>
    <svg width="9" height="9" viewBox="0 0 9 9"><rect x=".5" y=".5" width="8" height="8" rx="1.500" fill="#cfcfcf" stroke="#666" strokeWidth=".7" /><path d="M2.500 2.500l4 4M6.500 2.500l-4 4" stroke="#444" strokeWidth=".9" /></svg>
  </div>
);
const ArrowBtn = ({ d }: { d: "u" | "d" | "l" | "r" }) => {
  const map = {
    u: "border-x-[4px] border-b-[4px] border-x-transparent border-b-[#555555]",
    d: "border-x-[4px] border-t-[4px] border-x-transparent border-t-[#555555]",
    l: "border-y-[4px] border-r-[4px] border-y-transparent border-r-[#555555]",
    r: "border-y-[4px] border-l-[4px] border-y-transparent border-l-[#555555]",
  };
  return <div className={`h-0 w-0 ${map[d]}`} />;
};
const Spin = () => (
  <div className="flex w-[14px] shrink-0 flex-col items-center justify-center gap-[2px] border-l border-[#dddddd] bg-[#f2f2f2]">
    <ArrowBtn d="u" /><ArrowBtn d="d" />
  </div>
);
const Cb = ({ on, c = "" }: { on?: boolean; c?: string }) => (
  <div className={`flex h-[14px] w-[14px] shrink-0 items-center justify-center border border-[#b0b0b0] bg-white ${c}`}>
    {on && <svg width="12" height="12" viewBox="0 0 12 12"><path d="M2.500 6.500l2.500 3 4.500-8" fill="none" stroke="#111" strokeWidth="1.600" /></svg>}
  </div>
);

const menus: React.ReactNode[] = [
  <><u>P</u>roject</>, <><u>E</u>dit</>, <><u>V</u>iew</>, <><u>L</u>ayer</>, <><u>S</u>ettings</>, <><u>P</u>lugins</>, <>Vect<u>o</u>r</>, <><u>R</u>aster</>, <><u>D</u>atabase</>, <><u>W</u>eb</>, <><u>M</u>esh</>, <>DSGTools</>, <span className="text-[13px]">빠른 작업 도구</span>, <>Pro<u>c</u>essing</>, <><u>H</u>elp</>,
];

export default function App() {
  return (
    <div className="relative flex h-[720px] w-[1280px] flex-col overflow-hidden bg-[#f0f0f0] font-['Lato','Noto_Sans_CJK_KR',sans-serif] text-[12px] text-[#2c2c2c]">
      {/* title bar */}
      <div className="flex h-[23px] shrink-0 items-center bg-[#17505f] text-[12.5px] text-[#e4edef]">
        <div className="ml-[2px]"><Qlogo s={17} /></div>
        <span className="ml-[2px]">*Untitled Project — QGIS</span>
        <div className="ml-auto flex items-center">
          <div className="mr-[39px] h-px w-[11px] bg-[#b9cdd2]" />
          <svg width="12" height="12" viewBox="0 0 12 12" className="mr-[36px]"><path d="M3.500 2.500V1h7.500v7.500H9" fill="none" stroke="#e4edef" /><rect x="1" y="3" width="8" height="8" fill="none" stroke="#e4edef" /></svg>
          <svg width="12" height="12" viewBox="0 0 12 12" className="mr-[18px]"><path d="M.5.5l11 11M11.500.5l-11 11" stroke="#e4edef" /></svg>
        </div>
      </div>
      {/* menu */}
      <div className="flex h-[20px] shrink-0 items-center gap-[10.7px] bg-[#eeeded] pl-[9px] text-[12px]">
        {menus.map((m, i) => <span key={i} className="whitespace-nowrap">{m}</span>)}
      </div>
      {/* row 1 */}
      <Bar c="h-[28px] pt-[2px]">
        <G c="ml-[6px] mr-[3px]" />
        <B i={New} /><B i={Open} /><B i={Save} /><B i={SaveAs} /><B i={EditPage} /><B i={Style} />
        <G c="ml-[10px] mr-[3px]" /><B i={Plug} />
        <G c="ml-[10px] mr-[2px]" />
        <B i={Hist} /><B i={Hist2} c="ml-[1px]" /><B i={Hist} /><B i={Hist2} /><B i={Bulb} /><B i={Bulb} />
        <B i={More} c="ml-[4px]" />
        <G c="ml-[3px] mr-[5px]" /><B i={Cube} />
        <G c="ml-[8px] mr-[5px]" /><B i={SelYellow} /><Dr />
        <B i={SelExpr} c="ml-[4px]" /><Dr c="ml-[2px]" />
        <B i={SelDesel} c="ml-[3px]" /><Dr c="ml-[1px]" />
        <G c="ml-[55px] mr-[3px]" /><B i={HelpBook} />
        <G c="ml-[9px] mr-[2px]" /><B i={Identify} /><B i={Attr} /><B i={Stats} c="ml-[1px]" /><B i={Gear} on /><B i={Sigma} /><B i={Ruler} /><Dr c="ml-[2px]" />
        <B i={Tip} c="ml-[2px]" /><B i={DisSearch} /><Dr c="ml-[2px]" o />
        <B i={TextT} c="ml-[3px]" /><Dr c="ml-[1px]" />
      </Bar>
      {/* row 2 */}
      <Bar c="h-[29px] pt-[2px]">
        <G c="ml-[6px] mr-[7px]" />
        <B i={D1} /><Dr c="ml-[-2px]" o />
        <B i={D2} c="ml-[2px]" /><Dr c="ml-[1px]" o />
        <B i={D3} c="ml-[2px]" /><Dr c="ml-[3px]" o />
        <B i={D4} c="ml-[3px]" /><Dr c="ml-[1px]" o />
        <B i={D5} c="ml-[3px]" /><Dr c="ml-[1px]" o />
        <G c="ml-[12px] mr-[3px]" />
        <B i={Printer} /><B i={BlueDoc} c="ml-[1px]" /><B i={Purple} c="ml-[-1px]" /><Dr c="ml-[1px]" />
        <B i={Kml} c="ml-[5px]" /><Dr c="ml-[-1px]" />
        <B i={Grid} c="ml-[3px]" /><Dr c="ml-[2px]" />
        <B i={Ruler2} c="ml-[2px]" />
        <G c="ml-[11px] mr-[19px]" /><B i={Tbl} />
        <G c="ml-[8px] mr-[5px]" />
        <B i={Hand} on /><B i={Pan} /><B i={ZoomIn} /><B i={ZoomOut} /><B i={ZoomFull} /><B i={ZoomLayer} /><B i={ZoomSel} /><B i={Zoom11} />
        <B i={ZoomLast} c="ml-[1px]" /><B i={ZoomNext} /><B i={Bm1} /><B i={Bm2} /><B i={Bm3} /><B i={Clock} /><B i={Refresh} />
        <G c="ml-[8px] mr-[4px]" /><B i={G1} /><B i={G2} /><B i={G3} />
      </Bar>
      {/* row 3 */}
      <Bar c="h-[28px] pt-[2px]">
        <G c="ml-[6px] mr-[3px]" />
        <B i={R1} /><B i={R2} c="ml-[3px]" /><Dr c="ml-[-1px]" o />
        <B i={R3} c="ml-[2px]" /><B i={R4} /><B i={R3} /><B i={R5} /><B i={R3} /><B i={R5} /><B i={R5} /><B i={R6} /><B i={R7} />
        <B i={R8} c="ml-[1px]" /><B i={R9} c="ml-[-2px]" /><B i={R10} c="ml-[1px]" /><B i={R10} /><B i={R10} /><B i={R11} /><B i={R12} c="ml-[-1px]" /><Dr c="ml-[2px]" o />
        <G c="ml-[13px] mr-[3px]" /><B i={<Abc />} /><B i={PieL} />
        <Sep c="ml-[3px] mr-[3px]" />
        <B i={<Abc f="#9cc3ea" t="#27507a" b={<circle cx="15" cy="15" r="3" fill="#c8192c" />} />} />
        <B i={<Abc f="#fbd9d9" t="#c8192c" />} c="ml-[-1px]" />
        <Sep c="ml-[4px] mr-[2px]" />
        <B i={<Abc f="#999" t="#fff" o={0.4} b={<circle cx="15" cy="15" r="3" fill="#777" />} />} /><B i={<Abc f="#999" t="#fff" o={0.4} />} /><B i={<Abc f="#999" t="#fff" o={0.4} b={<rect x="11" y="11" width="8" height="8" fill="#777" />} />} /><B i={<Abc f="#999" t="#fff" o={0.4} b={<circle cx="15" cy="15" r="3" fill="none" stroke="#777" />} />} /><B i={<Abc f="#999" t="#fff" o={0.4} b={<rect x="11" y="11" width="8" height="8" fill="#888" />} />} />
        <B i={<Abc />} c="ml-[1px]" />
      </Bar>
      {/* row 4 */}
      <Bar c="h-[42px] pt-[4px]">
        <G c="ml-[6px] mr-[3px] opacity-40" />
        <B i={PyL} /><B i={Compass} /><B i={RedArrow} /><B i={KmlT} /><B i={HtmlT} /><B i={Hammer} /><B i={Undo} /><Dr c="ml-[2px]" />
        <B i={Pg} /><B i={TealG} /><B i={Lay} /><B i={Graph} /><B i={Dots} />
        <G c="ml-[11px] mr-[4px]" /><B i={Magnet} on /><B i={Tree1} c="ml-[1px]" /><B i={Spacing} c="ml-[-1px]" on />
        <div className="ml-px flex h-[20px] w-[73px] shrink-0 border border-[#c4c4c4] bg-white">
          <span className="flex-1 pl-[3px] leading-[18px]">12</span><Spin />
        </div>
        <div className="ml-[2px] flex h-[20px] w-[80px] shrink-0 items-center justify-between rounded-[2px] border border-[#b8b8b8] bg-[#fafafa] pl-[3px] pr-[5px]">
          <span>px</span><ArrowBtn d="d" />
        </div>
        <B i={TreeGray} c="ml-[2px]" /><B i={BlobG} /><B i={XG} /><B i={XY} /><Dr c="ml-[2px]" /><B i={Fork} c="ml-px" />
        <G c="ml-[11px] mr-[4px]" /><B i={Stack} /><B i={Box3} /><B i={VStar} /><B i={Feather} /><B i={Frame} />
        <Sep c="ml-[2px] mr-[4px]" /><B i={VBox} />
        <Sep c="ml-[2px]" />
        <G c="ml-[154px] mr-[3px]" /><B i={<Db />} />
        <G c="ml-[10px] mr-[3px]" /><B i={Timer} />
        <G c="ml-[105px] mr-[3px]" /><B i={<Db a="#b7c3ce" b="#9aa8b5" />} /><Dr c="ml-[2px]" />
        <B i={TodoY} c="ml-[2px]" /><Dr c="ml-[2px]" />
        <B i={DbX} c="ml-[2px]" /><Dr c="ml-[2px]" />
        <B i={More} c="ml-[17px]" />
      </Bar>

      {/* main */}
      <div className="flex h-[526px] shrink-0">
        {/* left toolbars */}
        <div className="flex w-[41px] shrink-0 flex-col items-start border-r border-[#c8c8c8] bg-linear-to-r from-[#f1f1f1] to-[#fafafa] pl-[5px] pt-[12px]">
          {[Vadd, Check, MeshA, Comma, Feat2, VBoxP].map((n, i) => <div key={i} className="flex h-[21.3px] items-center">{n}</div>)}
          {[PgP, Wms, Wfs, VGlobe, VY].map((n, i) => (
            <div key={i} className="flex h-[21.3px] items-center">{n}{i !== 2 && <Dr c="ml-[2px]" />}</div>
          ))}
        </div>
        <div className="flex w-[41px] shrink-0 flex-col items-start border-r border-[#c8c8c8] bg-linear-to-r from-[#f1f1f1] to-[#fafafa] pl-[11px] pt-[12px]">
          {[E1, Pencil, E3, R2].map((n, i) => <div key={i} className="flex h-[21.3px] items-center">{n}</div>)}
          <div className="flex h-[21.3px] items-center">{Scissors}<Dr o /></div>
          {[E4, Trash, Scissors, CopyD, PasteD, UndoD, RedoD].map((n, i) => <div key={i} className="flex h-[21.3px] items-center">{n}</div>)}
        </div>
        {/* browser + layers */}
        <div className="flex w-[202px] shrink-0 flex-col pl-px">
          <div className="flex h-[17px] shrink-0 items-center justify-between pb-px pl-[2px] pr-[1px]"><span>Browser</span><Dock /></div>
          <div className="flex h-[21px] shrink-0 items-center gap-px pb-[2px] pl-[3px]">
            {[
              <Svg s={16}><rect x="3" y="3" width="11" height="11" fill="#fff" stroke="#888" /><P /></Svg>,
              <Svg s={16}><path d="M4 8a6.500 6.500 0 0 1 11-3l2-1.500V10h-6l2.500-2.500A4 4 0 0 0 7 9z" fill="#3f8fd6" /><path d="M16 12a6.500 6.500 0 0 1-11 3l-2 1.500V10h6l-2.500 2.500A4 4 0 0 0 13 11z" fill="#3f8fd6" /></Svg>,
              <Svg s={16}><path d="M2 3h16l-6 7v8l-4-2v-6z" fill="#5c93a8" /><path d="M2 3h16v2H2z" fill="#d8c74a" /></Svg>,
              <Svg s={16}><rect x="3" y="7" width="9" height="10" fill="#eec25a" /><path d="M13 2l4 5h-3v9h-2V7H9z" fill="#3f6ea5" /></Svg>,
              <Svg s={16}><circle cx="10" cy="10" r="8" fill="#3f7fc4" /><rect x="9" y="8.500" width="2" height="6" fill="#fff" /><rect x="9" y="5" width="2" height="2" fill="#fff" /></Svg>,
            ].map((n, i) => <div key={i} className="flex w-[16px] justify-center">{n}</div>)}
          </div>
          <div className="flex h-[285px] shrink-0 flex-col border border-[#b9b9b9] bg-white">
            <div className="flex min-h-0 flex-1">
              <div className="min-w-0 flex-1 overflow-hidden">
                {browser.map(([t, ic, ar, hl], i) => (
                  <div key={i} className={`flex h-[18px] items-center whitespace-nowrap pl-[47px] ${hl ? "bg-[#efefef]" : ""}`}>
                    {ar ? <Tri /> : <div className="w-[5px] shrink-0" />}
                    <div className="ml-[8px] flex w-[18px] shrink-0 justify-center">{ic}</div>
                    <span className="ml-[3px]">{t}</span>
                  </div>
                ))}
              </div>
              <div className="flex w-[15px] shrink-0 flex-col border-l border-[#e4e4e4] bg-[#dadada]">
                <div className="flex h-[13px] shrink-0 items-center justify-center bg-[#f4f4f4]"><ArrowBtn d="u" /></div>
                <div className="h-[87px] shrink-0" />
                <div className="h-[29px] shrink-0 bg-[#f6f6f6]" />
                <div className="flex-1" />
                <div className="flex h-[12px] shrink-0 items-center justify-center bg-[#f4f4f4]"><ArrowBtn d="d" /></div>
              </div>
            </div>
            <div className="flex h-[14px] shrink-0 border-t border-[#e4e4e4] bg-[#f5f5f5]">
              <div className="flex w-[14px] items-center justify-center"><ArrowBtn d="l" /></div>
              <div className="w-[71px] border-l border-[#e4e4e4]" />
              <div className="w-[87px] bg-[#dcdcdc]" />
              <div className="flex w-[14px] items-center justify-center"><ArrowBtn d="r" /></div>
            </div>
          </div>
          <div className="mt-[5px] flex h-[17px] shrink-0 items-center justify-between pl-[2px] pr-[1px]"><span>Layers</span><Dock /></div>
          <div className="flex h-[22px] shrink-0 items-center gap-px pb-[5px] pl-[3px]">
            <Svg s={16}><path d="M3 15L11 6l5 3-7 8z" fill="#e3b23a" /><path d="M10 6l5-4 3 3-3 4z" fill="#c9452f" /></Svg>
            <Svg s={16}><rect x="3" y="6" width="9" height="11" fill="#f1f1f1" stroke="#777" /><path d="M9 1v12M3 9h14" stroke="#4f7a5c" /></Svg>
            <Svg s={16}><path d="M1 9c4-6 13-6 18 0-5 6-14 6-18 0z" fill="#dfdfdf" stroke="#666" /><circle cx="10" cy="9" r="3" fill="#555" /></Svg>
            <Svg s={16}><path d="M2 3h16l-6 7v8l-4-2v-6z" fill="#5c93a8" /><path d="M2 3h16v2H2z" fill="#d8c74a" /></Svg>
            <Svg s={16} o={0.3}><rect x="3" y="3" width="6" height="8" fill="none" stroke="#666" /><rect x="9" y="10" width="6" height="6" fill="none" stroke="#666" /></Svg>
            <Dr o />
            <div className="ml-[5px]"><Svg s={16}><path d="M3 3h6v7h3l-6 7-6-7h3z" fill="#eec25a" /><path d="M11 3h6v7h2l-5 7-5-7h2z" fill="#3f6ea5" /></Svg></div>
            <Svg s={16}><path d="M3 10h6v7H3z" fill="#eec25a" /><path d="M13 2l6 7h-3v8h-5V9H8z" fill="#3f6ea5" /></Svg>
            <Svg s={16}><rect x="3" y="3" width="13" height="13" fill="#fff" stroke="#777" /><rect x="12" y="13" width="6" height="3" fill="#d52a2a" /></Svg>
          </div>
          <div className="flex h-[158px] shrink-0 flex-col border border-[#b9b9b9] bg-white">
            <div className="flex h-[18px] items-center pl-[21px]">
              <Cb />
              <div className="ml-[5px] flex w-[16px] shrink-0 justify-center">
                <Svg s={15}><rect x="7" y="1" width="6" height="5" fill="none" stroke="#333" /><rect x="2" y="6" width="16" height="13" fill="#1c1c1c" /><circle cx="10" cy="12.500" r="3.500" fill="#fff" /><circle cx="10" cy="12.500" r="1.800" fill="#1c1c1c" /></Svg>
              </div>
              <div className="ml-px flex h-[18px] flex-1 items-center border border-[#cfe1f2] bg-[#eaf3fb] pl-px text-[12.5px] font-bold italic text-[#7d8ba3] underline">Camera</div>
            </div>
            <div className="flex h-[18px] items-center pl-[21px]">
              <Cb on />
              <div className="ml-[5px] flex w-[16px] shrink-0 justify-center pb-[4px]"><div className="h-[8px] w-[8px] rounded-full bg-[#ef0f1b]" /></div>
              <span className="ml-[2px] pt-[2px] text-[12.5px] font-bold text-black">Camera copy</span>
            </div>
          </div>
        </div>
        {/* canvas */}
        <div className="relative mb-px ml-[7px] mt-px w-[687px] shrink-0 border border-[#a8a8a8] bg-white">
          {points.map((p) => <div key={p} className={`absolute h-[8px] w-[8px] rounded-full bg-[#e6000f] ${p}`} />)}
        </div>
        {/* processing */}
        <div className="ml-[7px] flex w-[295px] shrink-0 flex-col">
          <div className="flex h-[17px] shrink-0 items-center justify-between pb-px pl-[2px]"><span>Processing Toolbox</span><Dock /></div>
          <div className="flex h-[21px] shrink-0 items-center pb-[2px] pl-[3px]">
            <div className="flex w-[17px] justify-center"><Svg s={15}><rect x="1" y="3" width="8" height="8" fill="#c82f2f" /><rect x="9" y="9" width="8" height="8" fill="#3f5f8a" /><circle cx="13" cy="5" r="3" fill="#777" /></Svg></div>
            <div className="flex w-[17px] justify-center"><Svg s={15}><path d="M10 2c-4 0-4 1.500-4 3v2h9v2H4C2 9 1 10 1 12s1 3 3 3h12c2 0 3-1 3-3s-1-3-3-3V5c0-2-2-3-6-3z" fill="#3d78ad" /><path d="M1 12h18v2c0 2-3 3-9 3s-9-1-9-3z" fill="#f0c93d" /></Svg></div>
            <div className="flex w-[17px] justify-center"><Svg s={15} o={0.7}><circle cx="10" cy="10" r="8" fill="#f5f5f5" stroke="#888" strokeWidth="1.300" /><path d="M10 4v6l-3 3" stroke="#888" fill="none" /></Svg></div>
            <div className="flex w-[17px] justify-center"><Svg s={15} o={0.4}><rect x="4" y="2" width="12" height="16" fill="#eee" stroke="#888" /><path d="M6 6h8M6 9h8M6 12h8" stroke="#888" /></Svg></div>
            <Sep c="mx-[5px] h-[14px]" />
            <div className="flex w-[17px] justify-center"><Svg s={15}><path d="M2 3h12l4 6-4 6H6l-1 3-1-3H2z" fill="#f2d33b" stroke="#c9ab3b" strokeWidth=".6" /></Svg></div>
            <Sep c="ml-[3px] mr-[3px] h-[14px]" />
            <div className="flex w-[17px] justify-center"><Svg s={15}><path d="M3 2l14 14-2 2L1 4z" fill="#d5d5d5" stroke="#666" strokeWidth=".8" /><path d="M12 11l5 5-2 2-5-5z" fill="#e0b544" /></Svg></div>
          </div>
          <div className="flex h-[19px] shrink-0 items-center border border-[#b9b9b9] bg-white pl-[4px] text-[#777777]">
            <svg width="12" height="12" viewBox="0 0 12 12"><circle cx="5" cy="5" r="3.500" fill="none" stroke="#888" /><path d="M8 8l3 3" stroke="#888" /></svg>
            <span className="ml-[3px]">Search...</span>
          </div>
          <div className="flex min-h-0 flex-1 border-x border-b border-[#b9b9b9] bg-white">
            <div className="min-w-0 flex-1 overflow-hidden">
              {proc.map(([t, ic], i) => (
                <div key={i} className="flex h-[18px] items-center whitespace-nowrap pl-[6px]">
                  <Tri />
                  <div className="ml-[9px] flex w-[18px] shrink-0 justify-center">{ic}</div>
                  <span className="ml-[2px]">{t}</span>
                </div>
              ))}
            </div>
            <div className="flex w-[15px] shrink-0 flex-col border-l border-[#e4e4e4] bg-[#f7f7f7]">
              <div className="flex h-[14px] shrink-0 items-center justify-center"><ArrowBtn d="u" /></div>
              <div className="flex-1" />
              <div className="h-[31px] shrink-0 bg-[#dcdcdc]" />
              <div className="flex h-[13px] shrink-0 items-center justify-center"><ArrowBtn d="d" /></div>
            </div>
          </div>
        </div>
      </div>

      {/* status bar */}
      <div className="flex h-[22px] shrink-0 items-center whitespace-nowrap pt-[4px] text-[11.5px] tracking-[-0.2px]">
        <div className="ml-[3px] flex h-[18px] w-[194px] shrink-0 items-center rounded-[2px] border border-[#cfcfcf] bg-white pl-[4px] text-[#777777]">
          <svg width="12" height="12" viewBox="0 0 12 12"><circle cx="5" cy="5" r="3.500" fill="none" stroke="#888" /><path d="M8 8l3 3" stroke="#888" /></svg>
          <span className="ml-[3px]">Type to locate (Ctrl+K)</span>
        </div>
        <span className="ml-[352px] w-[54px] shrink-0">Coordinate</span>
        <div className="flex h-[18px] w-[84px] shrink-0 items-center border border-[#cfcfcf] bg-white pl-[3px] text-[11px] tracking-[-0.3px]">680602,813784</div>
        <div className="ml-[3px] w-[20px] shrink-0"><Svg s={18}><path d="M3 3l14 14M5 14L15 4" stroke="#222" strokeWidth="1.600" /><circle cx="7" cy="7" r="3.500" fill="none" stroke="#222" strokeWidth="1.500" /><circle cx="12" cy="12" r="4" fill="none" stroke="#222" strokeWidth="1.500" /></Svg></div>
        <span className="ml-[5px] w-[28px] shrink-0">Scale</span>
        <div className="flex h-[18px] w-[75px] shrink-0 items-center justify-between border border-[#cfcfcf] bg-white pl-[3px] pr-[5px]"><span>1:15753</span><ArrowBtn d="d" /></div>
        <div className="ml-[8px] w-[14px] shrink-0"><svg width="14" height="16" viewBox="0 0 14 16"><rect x="1.500" y="7" width="11" height="8" rx="1" fill="#6a6a6a" /><path d="M4 7V4a3 3 0 0 1 6 0v3" fill="none" stroke="#777" strokeWidth="1.600" /></svg></div>
        <span className="ml-[5px] w-[47px] shrink-0">Magnifier</span>
        <div className="flex h-[18px] w-[69px] shrink-0 border border-[#cfcfcf] bg-white"><span className="flex-1 pl-[3px] leading-[16px]">100%</span><Spin /></div>
        <span className="ml-[6px] w-[46px] shrink-0">Rotation</span>
        <div className="flex h-[18px] w-[66px] shrink-0 border border-[#cfcfcf] bg-white"><span className="flex-1 pl-[3px] leading-[16px]">0.0 °</span><Spin /></div>
        <Cb on c="ml-[5px]" />
        <span className="ml-[5px] w-[41px] shrink-0">Render</span>
        <div className="ml-[7px] w-[16px] shrink-0"><Svg s={16}><circle cx="10" cy="10" r="8" fill="#eee" stroke="#666" /><path d="M2 10h16M2 6h16M2 14h16M10 2c-4 4-4 12 0 16M10 2c4 4 4 12 0 16" stroke="#666" strokeWidth=".9" fill="none" /></Svg></div>
        <span className="ml-[3px] w-[61px] shrink-0 text-[11px] tracking-[-0.3px]">EPSG:22992</span>
        <div className="ml-[16px] w-[16px] shrink-0"><Svg s={16}><path d="M10 2c5 0 9 3 9 7s-4 7-9 7l-5 3 1-4c-3-1-5-3-5-6 0-4 4-7 9-7z" fill="#5a5a5a" /><circle cx="6" cy="9" r="1" fill="#fff" /><circle cx="10" cy="9" r="1" fill="#fff" /><circle cx="14" cy="9" r="1" fill="#fff" /></Svg></div>
        <div className="ml-[8px] w-[16px] shrink-0"><Svg s={16}><path d="M2 8h5V4h3v4h6v10H2z" fill="#e8e8e8" stroke="#666" /></Svg></div>
      </div>
      <div className="h-[2px] shrink-0 bg-[#17505f]" />

      {/* overlays */}
      <div className="pointer-events-none absolute left-[999px] top-[639px] whitespace-nowrap text-[19.5px] text-[#8a8a8a99]">Activate Windows</div>
      <div className="pointer-events-none absolute left-[999px] top-[666px] whitespace-nowrap text-[14.5px] text-[#8a8a8a99]">Go to Settings to activate Windows.</div>
      <svg width="14" height="20" viewBox="0 0 14 20" className="pointer-events-none absolute left-[139px] top-[573px]"><path d="M1 1v14l3.500-3 2.500 6 2.500-1-2.500-6 4.500-.3z" fill="#fff" stroke="#555" strokeWidth="1" /></svg>
    </div>
  );
}
